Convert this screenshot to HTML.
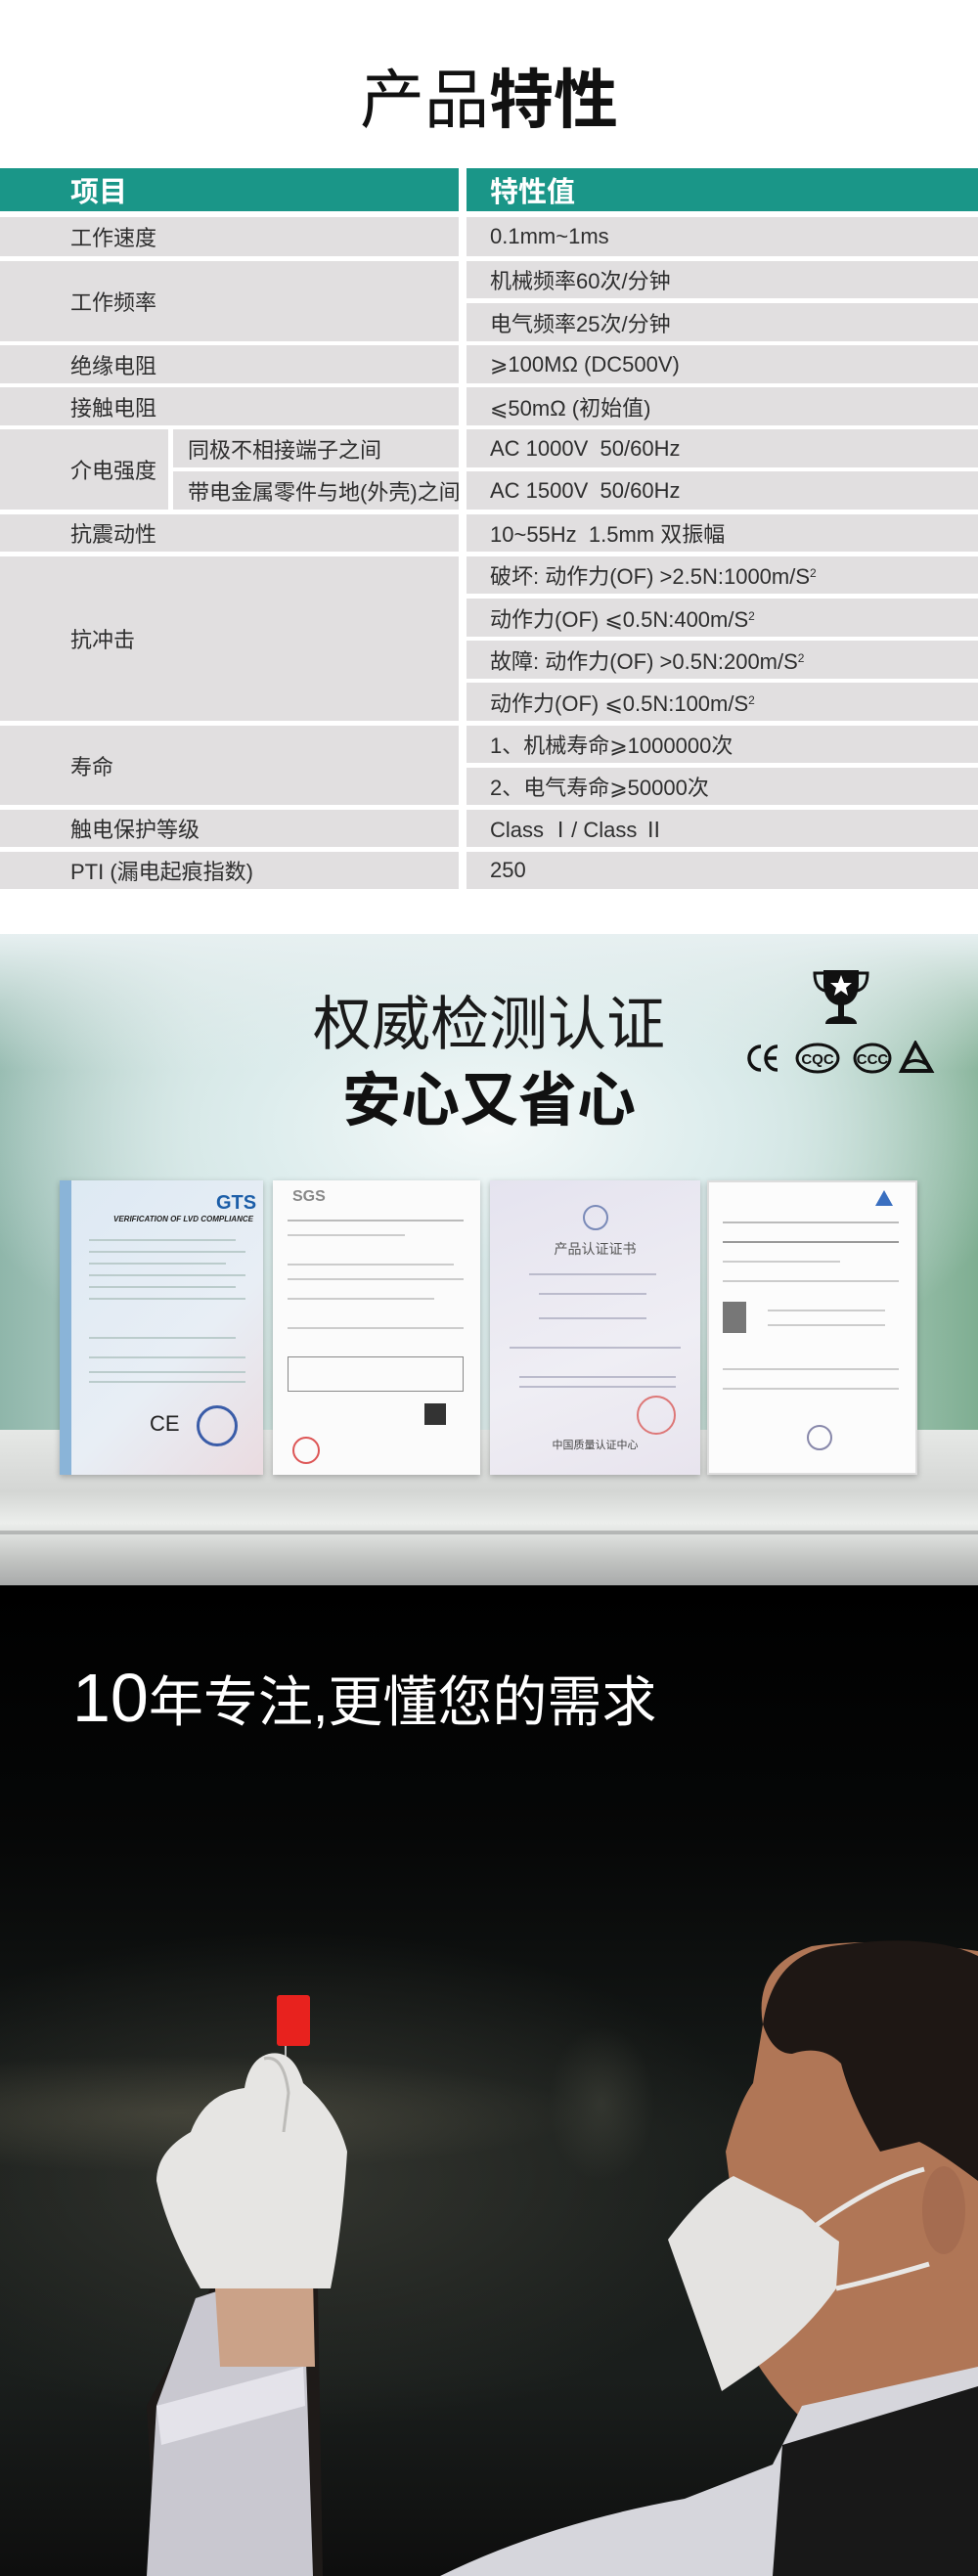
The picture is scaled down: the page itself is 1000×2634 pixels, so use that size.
<!DOCTYPE html>
<html><head><meta charset="utf-8">
<style>
*{margin:0;padding:0;box-sizing:border-box}
body{width:1000px;height:2634px;position:relative;background:#fff;font-family:"Liberation Sans","Noto Sans CJK SC",sans-serif;overflow:hidden}
.a{position:absolute}
.c{position:absolute;background:#e1dfe0;color:#2e2e2e;font-size:22px;display:flex;align-items:center;white-space:nowrap}
.h{position:absolute;background:#1a9688;color:#fff;font-size:29px;font-weight:bold;display:flex;align-items:center}
sup{font-size:12px;vertical-align:top;position:relative;top:-2px}
.card{position:absolute;box-shadow:0 2px 6px rgba(0,0,0,.25);overflow:hidden}
.ln{position:absolute;height:2px;background:#9aa}
</style></head><body>

<div class="a" style="left:0;top:62px;width:1000px;text-align:center;font-size:66px;color:#111;line-height:80px"><span>产品</span><b>特性</b></div>

<div class="h" style="left:0;top:172px;width:469px;height:44px;padding-left:72px">项目</div>
<div class="h" style="left:477px;top:172px;width:523px;height:44px;padding-left:24px">特性值</div>

<div class="c" style="left:0;top:222px;width:469px;height:40px;padding-left:72px">工作速度</div>
<div class="c" style="left:477px;top:222px;width:523px;height:40px;padding-left:24px">0.1mm~1ms</div>

<div class="c" style="left:0;top:267px;width:469px;height:82px;padding-left:72px">工作频率</div>
<div class="c" style="left:477px;top:267px;width:523px;height:38px;padding-left:24px">机械频率60次/分钟</div>
<div class="c" style="left:477px;top:310px;width:523px;height:39px;padding-left:24px">电气频率25次/分钟</div>

<div class="c" style="left:0;top:353px;width:469px;height:39px;padding-left:72px">绝缘电阻</div>
<div class="c" style="left:477px;top:353px;width:523px;height:39px;padding-left:24px">⩾100MΩ (DC500V)</div>

<div class="c" style="left:0;top:396px;width:469px;height:39px;padding-left:72px">接触电阻</div>
<div class="c" style="left:477px;top:396px;width:523px;height:39px;padding-left:24px">⩽50mΩ (初始值)</div>

<div class="c" style="left:0;top:439px;width:172px;height:82px;padding-left:72px">介电强度</div>
<div class="c" style="left:177px;top:439px;width:292px;height:39px;padding-left:15px">同极不相接端子之间</div>
<div class="c" style="left:177px;top:482px;width:292px;height:39px;padding-left:15px">带电金属零件与地(外壳)之间</div>
<div class="c" style="left:477px;top:439px;width:523px;height:39px;padding-left:24px">AC 1000V&nbsp;&nbsp;50/60Hz</div>
<div class="c" style="left:477px;top:482px;width:523px;height:39px;padding-left:24px">AC 1500V&nbsp;&nbsp;50/60Hz</div>

<div class="c" style="left:0;top:526px;width:469px;height:38px;padding-left:72px">抗震动性</div>
<div class="c" style="left:477px;top:526px;width:523px;height:38px;padding-left:24px">10~55Hz&nbsp;&nbsp;1.5mm 双振幅</div>

<div class="c" style="left:0;top:569px;width:469px;height:168px;padding-left:72px">抗冲击</div>
<div class="c" style="left:477px;top:569px;width:523px;height:38px;padding-left:24px">破坏: 动作力(OF) &gt;2.5N:1000m/S<sup>2</sup></div>
<div class="c" style="left:477px;top:612px;width:523px;height:39px;padding-left:24px">动作力(OF) ⩽0.5N:400m/S<sup>2</sup></div>
<div class="c" style="left:477px;top:655px;width:523px;height:39px;padding-left:24px">故障: 动作力(OF) &gt;0.5N:200m/S<sup>2</sup></div>
<div class="c" style="left:477px;top:698px;width:523px;height:39px;padding-left:24px">动作力(OF) ⩽0.5N:100m/S<sup>2</sup></div>

<div class="c" style="left:0;top:742px;width:469px;height:81px;padding-left:72px">寿命</div>
<div class="c" style="left:477px;top:742px;width:523px;height:38px;padding-left:24px">1、机械寿命⩾1000000次</div>
<div class="c" style="left:477px;top:785px;width:523px;height:38px;padding-left:24px">2、电气寿命⩾50000次</div>

<div class="c" style="left:0;top:828px;width:469px;height:38px;padding-left:72px">触电保护等级</div>
<div class="c" style="left:477px;top:828px;width:523px;height:38px;padding-left:24px">Class Ⅰ/ Class Ⅱ</div>

<div class="c" style="left:0;top:871px;width:469px;height:38px;padding-left:72px">PTI (漏电起痕指数)</div>
<div class="c" style="left:477px;top:871px;width:523px;height:38px;padding-left:24px">250</div>

<!-- certification section -->
<div class="a" style="left:0;top:955px;width:1000px;height:666px;overflow:hidden;background:radial-gradient(ellipse 55% 45% at 50% 30%,#f4f9f9 0%,#dcecec 45%,rgba(180,210,205,0) 100%),linear-gradient(90deg,#8fb6aa 0%,#c7dcd7 20%,#d7e6e5 50%,#bcd6cd 80%,#7fae92 100%)">
  <div class="a" style="left:0;top:0;width:1000px;height:140px;background:linear-gradient(180deg,#e7f0f1,rgba(230,240,240,0))"></div>
  <div class="a" style="left:0;top:507px;width:1000px;height:159px;background:linear-gradient(180deg,#e6e8e6 0%,#d4d6d4 40%,#eceeec 60%,#bfc1bf 85%,#a9abab 100%)"></div>
  <div class="a" style="left:0;top:610px;width:1000px;height:4px;background:#8a8c8c;opacity:.5"></div>
</div>

<div class="a" style="left:0;top:1012px;width:1000px;text-align:center;font-size:60px;color:#1a1a1a;line-height:72px">权威检测认证</div>
<div class="a" style="left:0;top:1090px;width:1000px;text-align:center;font-size:60px;font-weight:bold;color:#111;line-height:72px">安心又省心</div>

<svg class="a" style="left:830px;top:990px" width="60" height="58" viewBox="0 0 60 58">
<path d="M12 2h36v14c0 14-8 22-18 22S12 30 12 16z" fill="#111"/>
<path d="M12 5H3c0 12 5 17 11 18M48 5h9c0 12-5 17-11 18" fill="none" stroke="#111" stroke-width="3"/>
<polygon points="30,7 33,15 41,15 35,20 37,28 30,23 23,28 25,20 19,15 27,15" fill="#fff"/>
<rect x="27" y="36" width="6" height="14" fill="#111"/><path d="M14 57c0-6 8-8 16-8s16 2 16 8z" fill="#111"/>
</svg>
<svg class="a" style="left:762px;top:1064px" width="195" height="34" viewBox="0 0 195 34">
<path d="M16 6a12 12 0 0 0 0 24M33 6a12 12 0 0 0 0 24M22 18h10" fill="none" stroke="#111" stroke-width="3.5"/>
<ellipse cx="74" cy="18" rx="21" ry="14" fill="none" stroke="#111" stroke-width="3"/>
<text x="74" y="24" font-size="15" font-weight="bold" text-anchor="middle" font-family="Liberation Sans" fill="#111">CQC</text>
<ellipse cx="130" cy="18" rx="18" ry="14" fill="none" stroke="#111" stroke-width="3"/>
<text x="130" y="24" font-size="15" font-weight="bold" text-anchor="middle" font-family="Liberation Sans" fill="#111">CCC</text>
<path d="M174 3L160 31h30z" fill="none" stroke="#111" stroke-width="4"/><path d="M164 24c8-6 16-4 24 2" fill="none" stroke="#111" stroke-width="3"/>
</svg>

<!-- cards -->
<div class="card" style="left:61px;top:1207px;width:208px;height:301px;background:linear-gradient(135deg,#dde9f3,#e8eef5 60%,#eadbe0)">
  <div class="a" style="left:0;top:0;width:12px;height:301px;background:#8ab4d8"></div>
  <div class="a" style="left:160px;top:12px;font:bold 20px 'Liberation Sans';color:#1c5ea8">GTS</div>
  <div class="a" style="left:55px;top:35px;font:italic bold 8px 'Liberation Sans';color:#222">VERIFICATION OF LVD COMPLIANCE</div>
  <div class="ln" style="left:30px;top:60px;width:150px;background:#bcc"></div><div class="ln" style="left:30px;top:72px;width:160px;background:#bcc"></div>
  <div class="ln" style="left:30px;top:84px;width:140px;background:#bcc"></div><div class="ln" style="left:30px;top:96px;width:160px;background:#bcc"></div>
  <div class="ln" style="left:30px;top:108px;width:150px;background:#bcc"></div><div class="ln" style="left:30px;top:120px;width:160px;background:#bcc"></div>
  <div class="ln" style="left:30px;top:160px;width:150px;background:#bcc"></div><div class="ln" style="left:30px;top:180px;width:160px;background:#bcc"></div>
  <div class="ln" style="left:30px;top:195px;width:160px;background:#bcc"></div><div class="ln" style="left:30px;top:205px;width:160px;background:#bcc"></div>
  <div class="a" style="left:92px;top:236px;font:22px 'Liberation Sans';color:#222">CE</div>
  <div class="a" style="left:140px;top:230px;width:42px;height:42px;border-radius:50%;border:3px solid #3a5ca8"></div>
</div>
<div class="card" style="left:279px;top:1207px;width:212px;height:301px;background:#fbfbfb">
  <div class="a" style="left:20px;top:8px;font:bold 16px 'Liberation Sans';color:#888">SGS</div>
  <div class="ln" style="left:15px;top:40px;width:180px;background:#bbb"></div><div class="ln" style="left:15px;top:55px;width:120px;background:#ccc"></div>
  <div class="ln" style="left:15px;top:85px;width:170px;background:#ccc"></div><div class="ln" style="left:15px;top:100px;width:180px;background:#ccc"></div>
  <div class="ln" style="left:15px;top:120px;width:150px;background:#ccc"></div><div class="ln" style="left:15px;top:150px;width:180px;background:#ccc"></div>
  <div class="a" style="left:15px;top:180px;width:180px;height:36px;border:1px solid #888"></div>
  <div class="a" style="left:155px;top:228px;width:22px;height:22px;background:#333"></div>
  <div class="a" style="left:20px;top:262px;width:28px;height:28px;border-radius:50%;border:2px solid #d55"></div>
</div>
<div class="card" style="left:501px;top:1207px;width:215px;height:301px;background:linear-gradient(160deg,#e5e3ef,#efeef4 60%,#e8e4ee)">
  <div class="a" style="left:95px;top:25px;width:26px;height:26px;border-radius:50%;border:2px solid #7a8ab8"></div>
  <div class="a" style="left:0;top:60px;width:215px;text-align:center;font-size:14px;color:#555">产品认证证书</div>
  <div class="ln" style="left:40px;top:95px;width:130px;background:#bbc"></div><div class="ln" style="left:50px;top:115px;width:110px;background:#bbc"></div>
  <div class="ln" style="left:50px;top:140px;width:110px;background:#bbc"></div><div class="ln" style="left:20px;top:170px;width:175px;background:#bbc"></div>
  <div class="ln" style="left:30px;top:200px;width:160px;background:#bbc"></div><div class="ln" style="left:30px;top:210px;width:160px;background:#bbc"></div>
  <div class="a" style="left:150px;top:220px;width:40px;height:40px;border-radius:50%;border:2px solid #d77"></div>
  <div class="a" style="left:0;top:262px;width:215px;text-align:center;font-size:11px;color:#444">中国质量认证中心</div>
</div>
<div class="card" style="left:723px;top:1207px;width:215px;height:301px;background:#fcfcfc;border:2px solid #ddd">
  <div class="a" style="left:170px;top:8px;width:0;height:0;border-left:9px solid transparent;border-right:9px solid transparent;border-bottom:16px solid #3a6fc0"></div>
  <div class="ln" style="left:14px;top:40px;width:180px;background:#bbb"></div><div class="ln" style="left:14px;top:60px;width:180px;background:#999"></div>
  <div class="ln" style="left:14px;top:80px;width:120px;background:#ccc"></div><div class="ln" style="left:14px;top:100px;width:180px;background:#ccc"></div>
  <div class="a" style="left:14px;top:122px;width:24px;height:32px;background:#777"></div>
  <div class="ln" style="left:60px;top:130px;width:120px;background:#ccc"></div><div class="ln" style="left:60px;top:145px;width:120px;background:#ccc"></div>
  <div class="ln" style="left:14px;top:190px;width:180px;background:#ccc"></div><div class="ln" style="left:14px;top:210px;width:180px;background:#ccc"></div>
  <div class="a" style="left:100px;top:248px;width:26px;height:26px;border-radius:50%;border:2px solid #88a"></div>
</div>

<!-- dark section -->
<div class="a" style="left:0;top:1621px;width:1000px;height:1013px;overflow:hidden;background:radial-gradient(ellipse 50% 25% at 30% 60%,#33352f 0%,rgba(30,32,30,0) 100%),linear-gradient(180deg,#000 0%,#060707 25%,#181c1a 55%,#1a1e1c 80%,#0e0e0e 100%)">
  <div class="a" style="left:0;top:480px;width:600px;height:120px;background:radial-gradient(ellipse at 30% 50%,rgba(160,150,120,.22),rgba(0,0,0,0) 70%)"></div>
  <div class="a" style="left:560px;top:450px;width:110px;height:160px;background:radial-gradient(ellipse,rgba(130,130,110,.2),rgba(0,0,0,0) 70%)"></div>
</div>
<div class="a" style="left:74px;top:1696px;color:#fff;font-size:56px;line-height:80px;white-space:nowrap"><span style="font-size:70px">10</span>年专注,更懂您的需求</div>

<svg class="a" style="left:0;top:1900px" width="1000" height="734" viewBox="0 0 1000 734">
  <rect x="283" y="140" width="34" height="52" rx="3" fill="#e8221e"/>
  <line x1="292" y1="192" x2="292" y2="205" stroke="#bbb" stroke-width="2"/>
  <path d="M215 440 L325 440 L330 734 L160 734 L150 560 Z" fill="#1e1a18"/>
  <path d="M200 450 Q260 430 310 420 L320 734 L150 734 L160 560 Z" fill="#c9c8d0"/>
  <path d="M160 560 L310 520 L312 560 L165 600 Z" fill="#e4e3ea"/>
  <path d="M220 440 Q270 420 320 430 L322 520 L225 520 Z" fill="#cba288"/>
  <path d="M205 440 Q170 380 160 330 Q160 300 195 280 Q210 240 250 235 Q255 205 275 200 Q300 195 310 230 Q345 260 355 300 Q350 380 338 440 Z" fill="#e6e5e3"/>
  <path d="M270 205 Q290 200 295 240 L290 280" fill="none" stroke="#bdbcb9" stroke-width="3"/>
  <path d="M780 170 Q770 110 830 90 Q900 80 1000 95 L1000 560 L850 600 Q800 560 770 510 Q745 460 755 400 L742 300 Q755 250 770 230 Z" fill="#b07656"/>
  <path d="M780 170 Q790 100 850 90 Q950 75 1000 100 L1000 330 Q960 300 940 290 L900 300 Q870 250 860 210 Q840 190 810 200 Q790 200 780 170 Z" fill="#1e1714"/>
  <ellipse cx="965" cy="360" rx="22" ry="45" fill="#a56c50"/>
  <path d="M683 390 Q720 340 750 325 L820 360 Q840 380 858 392 L855 440 Q820 490 760 530 L738 545 Q715 480 683 390 Z" fill="#e4e3e1"/>
  <path d="M835 375 Q900 330 945 318 M855 440 Q900 430 950 415" fill="none" stroke="#e8e7e5" stroke-width="5"/>
  <path d="M450 734 Q560 680 700 655 L790 620 L820 560 L1000 520 L1000 734 Z" fill="#d6d6dc"/>
  <path d="M790 734 L800 600 L1000 540 L1000 734 Z" fill="#181818"/>
</svg>

</body></html>
